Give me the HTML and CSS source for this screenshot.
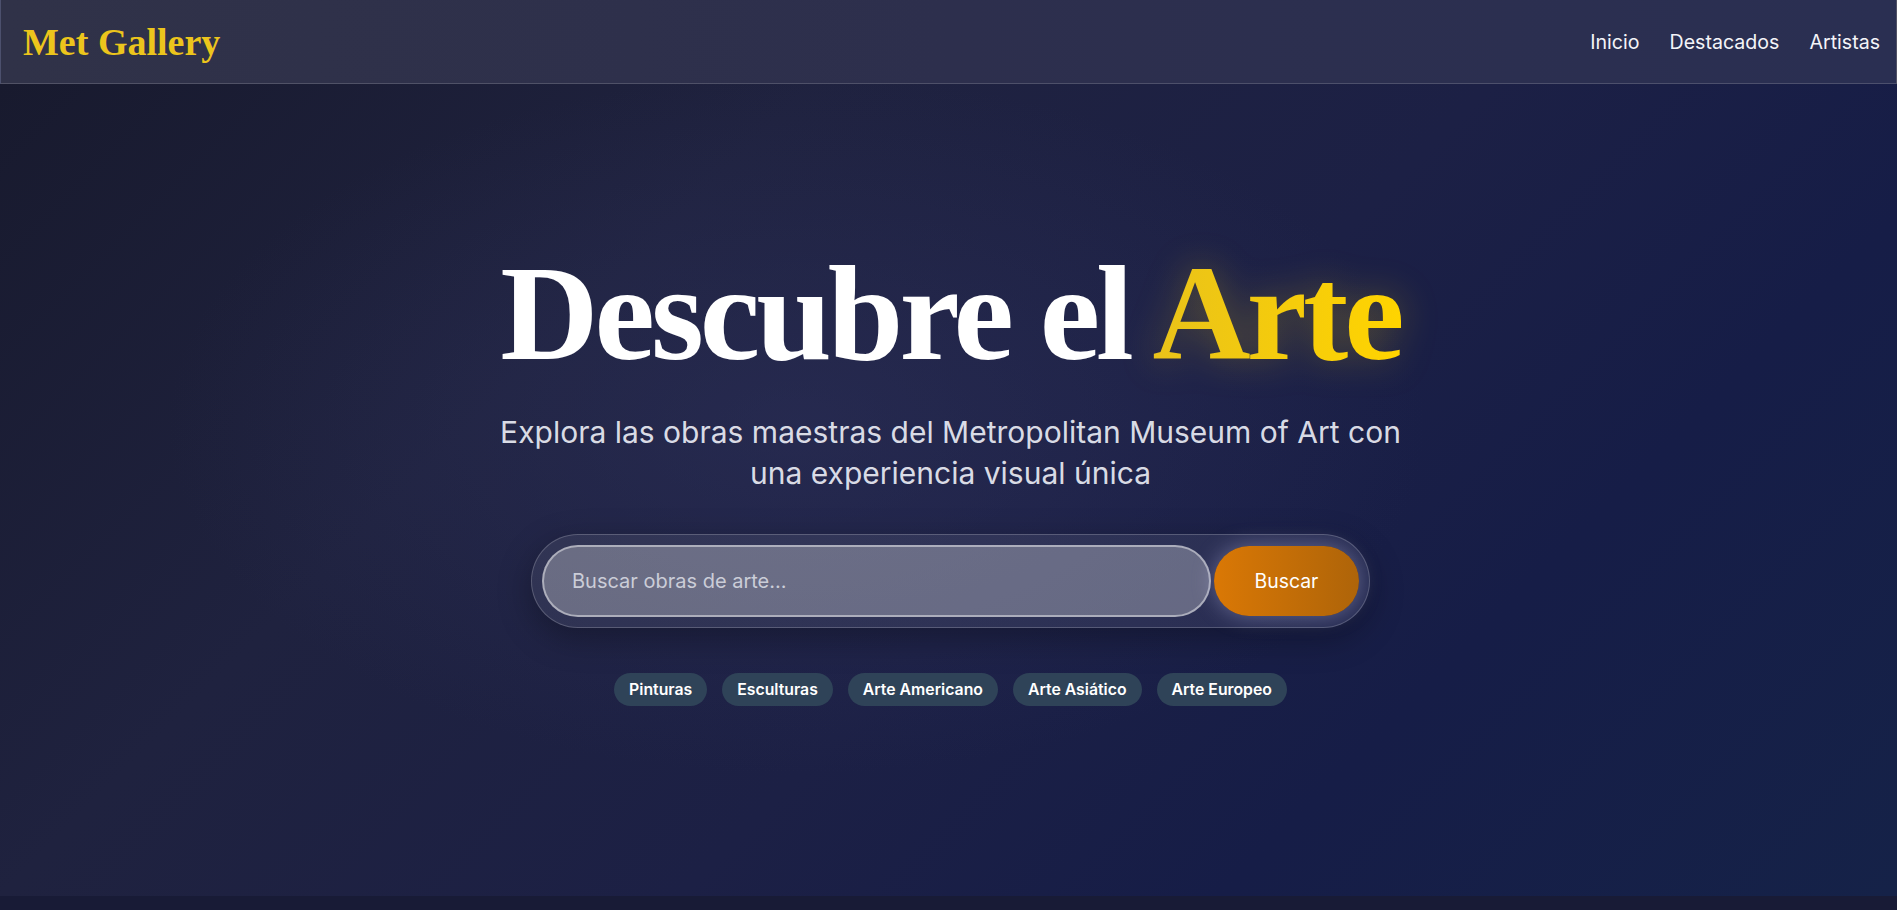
FILE: index.html
```html
<!DOCTYPE html>
<html lang="es">
<head>
<meta charset="utf-8">
<title>Met Gallery</title>
<link rel="stylesheet" href="styles.css">
</head>
<body>
<header class="navbar">
  <a class="logo" href="#">Met Gallery</a>
  <nav class="nav-links">
    <a href="#">Inicio</a>
    <a href="#">Destacados</a>
    <a href="#">Artistas</a>
  </nav>
</header>
<main class="hero">
  <div class="hero-content">
    <h1 class="hero-title">Descubre el <span class="gold">Arte</span></h1>
    <p class="hero-subtitle">Explora las obras maestras del Metropolitan Museum of Art con una experiencia visual única</p>
    <form class="search-box">
      <input class="search-input" type="text" placeholder="Buscar obras de arte...">
      <button class="search-btn" type="button">Buscar</button>
    </form>
    <div class="chips">
      <span class="chip">Pinturas</span>
      <span class="chip">Esculturas</span>
      <span class="chip">Arte Americano</span>
      <span class="chip">Arte Asiático</span>
      <span class="chip">Arte Europeo</span>
    </div>
  </div>
</main>
</body>
</html>
```
FILE: styles.css
```css
* { box-sizing: border-box; }
html, body { margin: 0; padding: 0; }
body {
  background: #181b36;
  font-family: "Inter", "Noto Sans", sans-serif;
  color: #fff;
  height: 910px;
  overflow: hidden;
}
a { text-decoration: none; color: inherit; }

.navbar {
  height: 84px;
  display: flex;
  align-items: center;
  justify-content: space-between;
  padding: 0 16px 0 22px;
  background: linear-gradient(90deg, #303248 0%, #2d2f4d 50%, #2a2f52 100%);
  border: 1px solid rgba(255,255,255,0.16);
  border-top: none;
}
.logo {
  font-family: "Liberation Serif", "DejaVu Serif", serif;
  font-weight: 700;
  font-size: 38px;
  color: #ecc51c;
  margin-top: 1px;
}
.nav-links {
  display: flex;
  gap: 30px;
  font-size: 19.6px;
  font-weight: 400;
  color: #f4f4f8;
}

.hero {
  height: 812px;
  display: flex;
  flex-direction: column;
  justify-content: center;
  align-items: center;
  padding-bottom: 36px;
  background:
    radial-gradient(ellipse 900px 500px at 42% 42%, rgba(48,52,96,0.45), rgba(48,52,96,0) 70%),
    linear-gradient(135deg, #181a2e 0%, #1f223f 30%, #1c2045 55%, #161d47 75%, #152248 100%);
}
.hero-content {
  display: flex;
  flex-direction: column;
  align-items: center;
  text-align: center;
  margin-left: 4px;
}
.hero-title {
  margin: 0;
  font-family: "Liberation Serif", "DejaVu Serif", serif;
  font-weight: 700;
  font-size: 136px;
  letter-spacing: -4px;
  line-height: 150px;
  color: #ffffff;
}
.gold {
  color: #f5c911;
  background: linear-gradient(90deg, #e9c21a 0%, #ffd400 100%);
  -webkit-background-clip: text;
  background-clip: text;
  -webkit-text-fill-color: transparent;
  filter: drop-shadow(0 0 18px rgba(255, 210, 0, 0.28));
}
.hero-subtitle {
  margin: 24px 0 0;
  max-width: 930px;
  font-size: 30px;
  line-height: 41px;
  color: rgba(236, 238, 246, 0.92);
}

.search-box {
  margin-top: 40px;
  width: 839px;
  display: flex;
  align-items: center;
  gap: 3px;
  padding: 10px;
  border-radius: 60px;
  background: rgba(255,255,255,0.07);
  border: 1px solid rgba(255,255,255,0.2);
  box-shadow: 0 10px 34px rgba(0,0,0,0.3);
}
.search-input {
  flex: 1;
  height: 72px;
  border-radius: 40px;
  border: 2px solid rgba(255,255,255,0.45);
  background: rgba(255,255,255,0.28);
  padding: 0 28px;
  font-family: "Inter", sans-serif;
  font-size: 20px;
  color: #fff;
  outline: none;
}
.search-input::placeholder { color: #cbcdd8; }
.search-btn {
  width: 145px;
  height: 70px;
  border: none;
  border-radius: 40px;
  background: linear-gradient(90deg, #da7805 0%, #ae6409 100%);
  color: #fff;
  font-family: "Inter", sans-serif;
  font-size: 19.4px;
  font-weight: 400;
  box-shadow: 0 0 22px rgba(205, 210, 255, 0.35);
}

.chips {
  margin-top: 45px;
  display: flex;
  gap: 15px;
}
.chip {
  background: #2f4358;
  color: #fff;
  font-size: 15.8px;
  font-weight: 600;
  padding: 7px 15px;
  border-radius: 20px;
  line-height: 19px;
}
```
